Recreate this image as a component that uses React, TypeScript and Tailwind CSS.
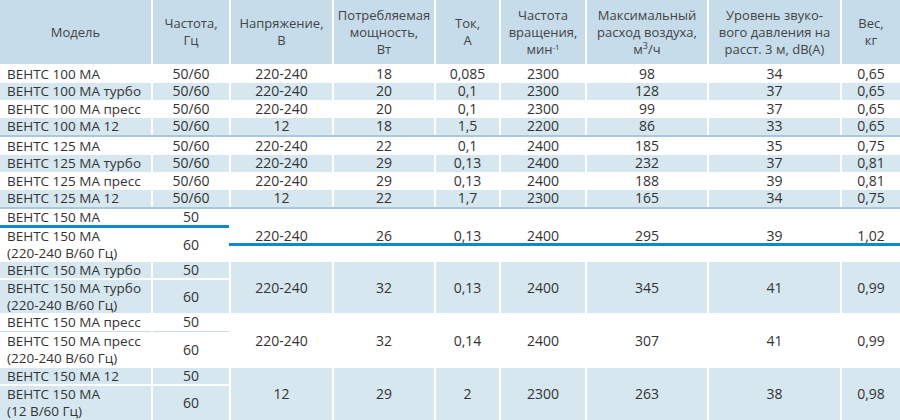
import React from "react";

const COLS =
  "grid grid-cols-[151px_76px_101px_100px_63px_84px_120px_131px_58px] gap-x-[2px]";

const HEAD = "bg-[#c6dcea]";
const BLUE = "bg-[#d6e7f0]";

type Row = string[];

const group100: Row[] = [
  ["ВЕНТС 100 МА", "50/60", "220-240", "18", "0,085", "2300", "98", "34", "0,65"],
  ["ВЕНТС 100 МА турбо", "50/60", "220-240", "20", "0,1", "2300", "128", "37", "0,65"],
  ["ВЕНТС 100 МА пресс", "50/60", "220-240", "20", "0,1", "2300", "99", "37", "0,65"],
  ["ВЕНТС 100 МА 12", "50/60", "12", "18", "1,5", "2200", "86", "33", "0,65"],
];

const group125: Row[] = [
  ["ВЕНТС 125 МА", "50/60", "220-240", "22", "0,1", "2400", "185", "35", "0,75"],
  ["ВЕНТС 125 МА турбо", "50/60", "220-240", "29", "0,13", "2400", "232", "37", "0,81"],
  ["ВЕНТС 125 МА пресс", "50/60", "220-240", "29", "0,13", "2400", "188", "39", "0,81"],
  ["ВЕНТС 125 МА 12", "50/60", "12", "22", "1,7", "2300", "165", "34", "0,75"],
];

function StripedRows({ rows }: { rows: Row[] }) {
  return (
    <div className="flex flex-col">
      {rows.map((r, i) => (
        <div key={i} className={`${COLS} h-[17.5px]`}>
          {r.map((c, j) => (
            <div
              key={j}
              className={`flex items-center ${i % 2 === 1 ? BLUE : "bg-white"} ${
                j === 0 ? "pl-[7px] text-[13.5px]" : "justify-center"
              }`}
            >
              {c}
            </div>
          ))}
        </div>
      ))}
    </div>
  );
}

type Group = {
  top: string;
  bottom: string[];
  values: string[];
  blue: boolean;
  rows: string;
  mid: "accent" | "gap" | "line";
};

const group150: Group[] = [
  {
    top: "ВЕНТС 150 МА",
    bottom: ["ВЕНТС 150 МА", "(220-240 В/60 Гц)"],
    values: ["220-240", "26", "0,13", "2400", "295", "39", "1,02"],
    blue: false,
    rows: "grid-rows-[16px_3px_34px]",
    mid: "accent",
  },
  {
    top: "ВЕНТС 150 МА турбо",
    bottom: ["ВЕНТС 150 МА турбо", "(220-240 В/60 Гц)"],
    values: ["220-240", "32", "0,13", "2400", "345", "41", "0,99"],
    blue: true,
    rows: "grid-rows-[16px_2px_33px]",
    mid: "gap",
  },
  {
    top: "ВЕНТС 150 МА пресс",
    bottom: ["ВЕНТС 150 МА пресс", "(220-240 В/60 Гц)"],
    values: ["220-240", "32", "0,14", "2400", "307", "41", "0,99"],
    blue: false,
    rows: "grid-rows-[18px_1px_36px]",
    mid: "line",
  },
  {
    top: "ВЕНТС 150 МА 12",
    bottom: ["ВЕНТС 150 МА", "(12 В/60 Гц)"],
    values: ["12", "29", "2", "2300", "263", "38", "0,98"],
    blue: true,
    rows: "grid-rows-[16px_2px_34px]",
    mid: "gap",
  },
];

function MergedGroup({ g }: { g: Group }) {
  const bg = g.blue ? BLUE : "bg-white";
  return (
    <div className={`${COLS} ${g.rows}`}>
      <div className={`col-start-1 row-start-1 flex items-center pl-[7px] text-[13.5px] ${bg}`}>
        {g.top}
      </div>
      <div className={`col-start-2 row-start-1 flex items-center justify-center ${bg}`}>
        50
      </div>
      {g.mid === "accent" && (
        <div className="col-start-1 col-span-2 row-start-2 bg-[#0a8ad6]" />
      )}
      {g.mid === "line" && (
        <>
          <div className="col-start-1 row-start-2 bg-[#c6dcea]" />
          <div className="col-start-2 row-start-2 bg-[#c6dcea]" />
        </>
      )}
      <div
        className={`col-start-1 row-start-3 flex flex-col justify-center pl-[7px] text-[13.5px] leading-[17px] ${bg}`}
      >
        {g.bottom.map((l) => (
          <span key={l}>{l}</span>
        ))}
      </div>
      <div className={`col-start-2 row-start-3 flex items-center justify-center ${bg}`}>
        60
      </div>
      {g.values.map((v, i) => (
        <div
          key={i}
          className={`row-start-1 row-span-3 flex items-center justify-center ${bg}`}
          style={{ gridColumnStart: i + 3 }}
        >
          {v}
        </div>
      ))}
      {g.mid === "accent" && (
        <div className="col-start-3 col-span-7 row-start-1 row-span-3 -ml-[2px] pt-[34px]">
          <div className="h-[3px] bg-[#0a8ad6]" />
        </div>
      )}
    </div>
  );
}

function Header() {
  const cell = `${HEAD} flex items-center justify-center`;
  return (
    <div className={`${COLS} h-[64px] mb-px text-[13px] text-[#444] leading-[17px] text-center`}>
      <div className={cell}>Модель</div>
      <div className={cell}>
        <div>
          Частота,
          <br />
          Гц
        </div>
      </div>
      <div className={cell}>
        <div>
          Напряжение,
          <br />В
        </div>
      </div>
      <div className={cell}>
        <div>
          Потребляемая
          <br />
          мощность,
          <br />
          Вт
        </div>
      </div>
      <div className={cell}>
        <div>
          Ток,
          <br />А
        </div>
      </div>
      <div className={cell}>
        <div>
          Частота
          <br />
          вращения,
          <br />
          мин<sup className="text-[8px]">-1</sup>
        </div>
      </div>
      <div className={cell}>
        <div>
          Максимальный
          <br />
          расход воздуха,
          <br />
          м<sup className="text-[9px]">3</sup>/ч
        </div>
      </div>
      <div className={cell}>
        <div>
          Уровень звуко-
          <br />
          вого давления на
          <br />
          расст. 3 м, dB(A)
        </div>
      </div>
      <div className={cell}>
        <div>
          Вес,
          <br />
          кг
        </div>
      </div>
    </div>
  );
}

export default function App() {
  return (
    <div className="w-[900px] h-[420px] overflow-hidden bg-white font-['Open_Sans',sans-serif] text-[14px] leading-[16px] text-[#333]">
      <Header />
      <StripedRows rows={group100} />
      <div className="h-[2px] bg-[#a9c8dc]" />
      <StripedRows rows={group125} />
      <div className="h-[2px] bg-[#a9c8dc]" />
      {group150.map((g) => (
        <MergedGroup key={g.top} g={g} />
      ))}
    </div>
  );
}
